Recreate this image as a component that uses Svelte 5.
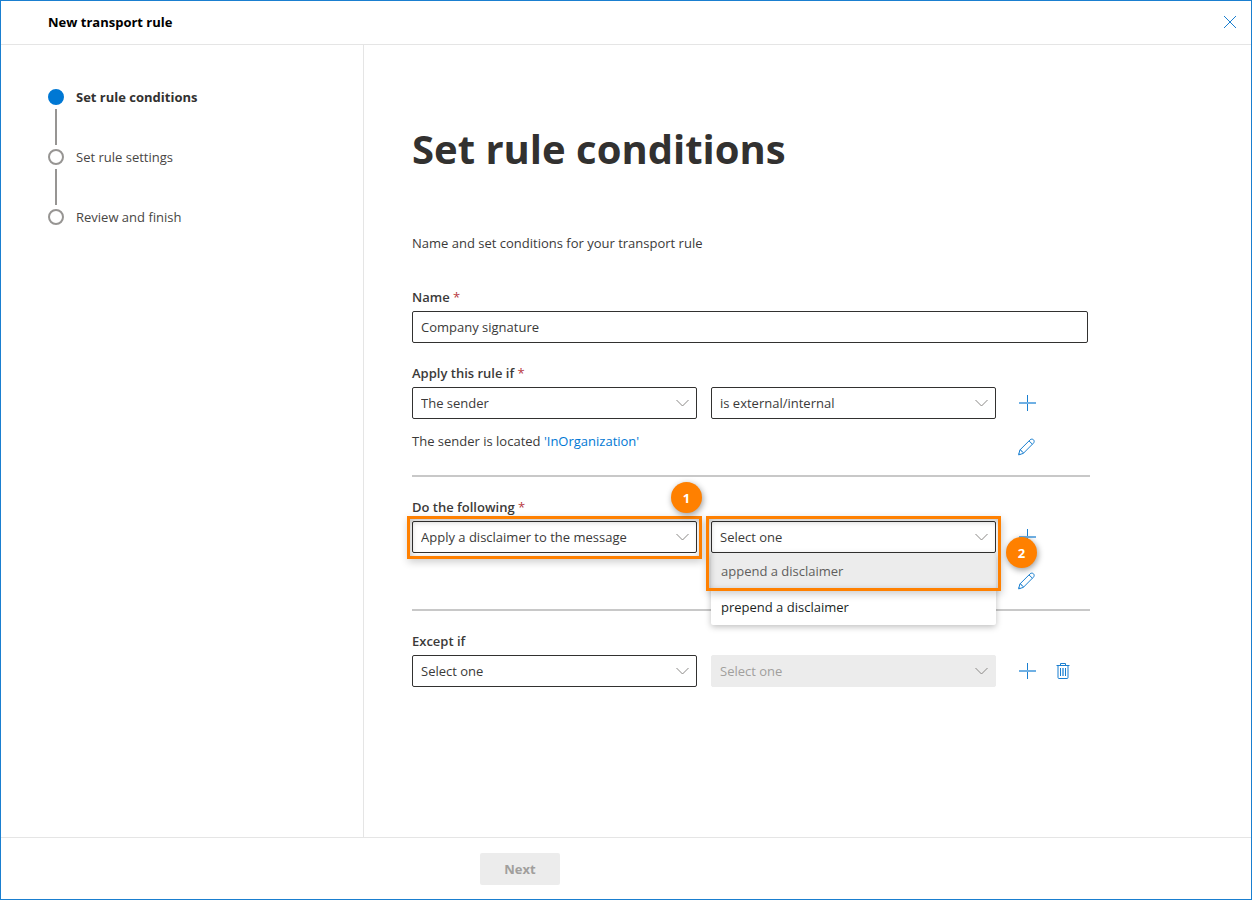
<script>
  const steps = ['Set rule conditions', 'Set rule settings', 'Review and finish']
  const senderOptions = ['The sender', 'The recipient', 'Apply to all messages']
  const scopeOptions = ['is external/internal', 'is this person', 'is a member of this group']
  const disclaimerOptions = ['append a disclaimer', 'prepend a disclaimer']

  let currentStep = $state(0)
  let name = $state('Company signature')
  let condition = $state('The sender')
  let scope = $state('is external/internal')
  let action = $state('Apply a disclaimer to the message')
  let placement = $state('')
  let exception = $state('')
  let menuOpen = $state(true)

  function pick(option) {
    placement = option
    menuOpen = false
  }
</script>

{#snippet chevron()}
  <svg class="chevron" viewBox="0 0 13 8" aria-hidden="true">
    <path d="M0.5 1 L6.5 7 L12.5 1" />
  </svg>
{/snippet}

{#snippet addButton(label)}
  <button type="button" class="icon-btn" aria-label={label}>
    <svg width="18" height="18" viewBox="0 0 18 18" aria-hidden="true">
      <path d="M9.5 1v16" />
      <path class="soft" d="M1 9h17" />
    </svg>
  </button>
{/snippet}

{#snippet editButton(label)}
  <button type="button" class="icon-btn" aria-label={label}>
    <svg width="18" height="18" viewBox="0 0 18 18" aria-hidden="true">
      <path d="M.6 16.9 L1.9 12 L12 1.9 C13 .9 14.6 .9 15.5 1.8 C16.4 2.7 16.4 4.2 15.4 5.2 L5.3 15.4 Z" />
      <path d="M11 2.9 L14.4 6.2 M1.9 12 C3.3 12 3.8 12.6 3.7 13.6 C4.7 13.5 5.3 14.1 5.3 15.4 M.9 15.4 L2 16.5" />
    </svg>
  </button>
{/snippet}

<div class="window">
  <header>
    <strong>New transport rule</strong>
    <button type="button" class="close" aria-label="Close">
      <svg width="14" height="14" viewBox="0 0 14 14" aria-hidden="true">
        <path d="M1 1 L13 13 M13 1 L1 13" />
      </svg>
    </button>
  </header>

  <div class="content">
    <nav aria-label="Steps">
      <ol>
        {#each steps as step, i (step)}
          <li class:active={i === currentStep}>
            <span class="dot"></span>
            <span>{step}</span>
          </li>
        {/each}
      </ol>
    </nav>

    <main>
      <h1>Set rule conditions</h1>
      <p class="intro">Name and set conditions for your transport rule</p>

      <form id="rule-form" onsubmit={(e) => e.preventDefault()}>
        <div class="name-field">
          <label for="name">Name <span class="required">*</span></label>
          <input id="name" type="text" bind:value={name} />
        </div>

        <section>
          <label for="condition">Apply this rule if <span class="required">*</span></label>
          <div class="row">
            <div class="select">
              <select id="condition" bind:value={condition}>
                {#each senderOptions as option (option)}
                  <option>{option}</option>
                {/each}
              </select>
              {@render chevron()}
            </div>
            <div class="select">
              <select aria-label="Condition type" bind:value={scope}>
                {#each scopeOptions as option (option)}
                  <option>{option}</option>
                {/each}
              </select>
              {@render chevron()}
            </div>
            <div class="actions">{@render addButton('Add condition')}</div>
          </div>
          <div class="row detail">
            <p>The sender is located <a href="#location">'InOrganization'</a></p>
            <div class="actions">{@render editButton('Edit condition')}</div>
          </div>
        </section>

        <section>
          <label for="action">Do the following <span class="required">*</span></label>
          <div class="row">
            <div class="select">
              <select id="action" bind:value={action}>
                <option>Apply a disclaimer to the message</option>
                <option>Block the message</option>
              </select>
              {@render chevron()}
              <span class="frame"></span>
              <span class="badge first">1</span>
            </div>
            <div class="select">
              <button
                type="button"
                class="combo"
                aria-haspopup="listbox"
                aria-expanded={menuOpen}
                aria-label="Disclaimer placement"
                onclick={() => (menuOpen = !menuOpen)}>{placement || 'Select one'}</button
              >
              {@render chevron()}
              {#if menuOpen}
                <div class="menu" role="listbox">
                  {#each disclaimerOptions as option, i (option)}
                    <button
                      type="button"
                      role="option"
                      aria-selected={placement === option}
                      class:hovered={i === 0}
                      onclick={() => pick(option)}>{option}</button
                    >
                  {/each}
                </div>
                <span class="frame tall"></span>
              {/if}
              <span class="badge second">2</span>
            </div>
            <div class="actions">{@render addButton('Add action')}</div>
          </div>
          <div class="row detail">
            <p></p>
            <div class="actions">{@render editButton('Edit action')}</div>
          </div>
        </section>

        <section>
          <label for="exception">Except if</label>
          <div class="row">
            <div class="select">
              <select id="exception" bind:value={exception}>
                <option value="">Select one</option>
                {#each senderOptions as option (option)}
                  <option>{option}</option>
                {/each}
              </select>
              {@render chevron()}
            </div>
            <div class="select">
              <select aria-label="Exception type" disabled>
                <option>Select one</option>
              </select>
              {@render chevron()}
            </div>
            <div class="actions">
              {@render addButton('Add exception')}
              <button type="button" class="icon-btn" aria-label="Delete exception">
                <svg width="14" height="18" viewBox="0 0 14 18" aria-hidden="true">
                  <path d="M.5 3.5h13M4.5 3.5v-2h5v2M2 3.5v12q0 1 1 1h8q1 0 1-1v-12" />
                  <path class="soft" d="M7 6v8" />
                  <path d="M4.5 6v8M9.5 6v8" />
                </svg>
              </button>
            </div>
          </div>
        </section>
      </form>
    </main>
  </div>

  <footer>
    <button type="submit" form="rule-form" class="next" disabled>Next</button>
  </footer>
</div>

<style>
  :global(body) {
    margin: 0;
    background: #fff;
  }
  .window {
    box-sizing: border-box;
    min-height: 100vh;
    display: flex;
    flex-direction: column;
    border: 1px solid #1a7fd0;
    font-family: 'Open Sans', 'Noto Sans', sans-serif;
    font-size: 13px;
    line-height: 20px;
    color: #3b3a39;
  }
  button,
  input,
  select {
    font: inherit;
    color: inherit;
  }
  button {
    cursor: pointer;
  }

  header {
    box-sizing: border-box;
    display: flex;
    align-items: center;
    justify-content: space-between;
    height: 44px;
    padding: 0 5px 1px 47px;
    border-bottom: 1px solid #e5e5e5;
    color: #000;
  }
  svg {
    display: block;
    fill: none;
    stroke: #1a7fd0;
    stroke-width: 1;
  }
  .soft {
    stroke: #6fb0e4;
    stroke-width: 2;
  }
  .close,
  .icon-btn {
    display: flex;
    align-items: center;
    justify-content: center;
    width: 32px;
    height: 32px;
    padding: 0;
    border: 0;
    background: none;
  }

  .content {
    flex: 1;
    display: flex;
  }
  nav {
    box-sizing: border-box;
    width: 363px;
    flex-shrink: 0;
    padding: 42px 47px;
    border-right: 1px solid #e5e5e5;
  }
  ol {
    display: grid;
    gap: 40px;
    margin: 0;
    padding: 0;
    list-style: none;
  }
  li {
    position: relative;
    display: flex;
    align-items: center;
    gap: 12px;
    color: #484644;
  }
  li.active {
    font-weight: 700;
    color: #323130;
  }
  .dot {
    box-sizing: border-box;
    width: 16px;
    height: 16px;
    border: 2px solid #979593;
    border-radius: 50%;
  }
  .active .dot {
    border-color: #0078d4;
    background: #0078d4;
  }
  li:not(:last-child)::after {
    content: '';
    position: absolute;
    top: 22px;
    left: 7px;
    width: 2px;
    height: 36px;
    background: #979593;
  }

  main {
    flex: 1;
    min-width: 0;
    padding: 72px 48px 48px;
  }
  h1 {
    margin: 0;
    color: #323130;
    font-size: 40px;
    line-height: 64px;
  }
  .intro {
    margin: 52px 0 34px;
  }
  form {
    max-width: 678px;
  }
  label {
    display: block;
    width: fit-content;
    margin-bottom: 4px;
    font-weight: 600;
  }
  .required {
    color: #b8383e;
    font-weight: 400;
  }
  .name-field {
    margin: 0 2px 20px 0;
  }
  input,
  select,
  .combo {
    display: block;
    box-sizing: border-box;
    width: 100%;
    height: 32px;
    padding: 0 8px;
    border: 1px solid #323130;
    border-radius: 2px;
    background: #fff;
    text-align: left;
  }
  select {
    appearance: none;
  }
  select:disabled {
    border-color: #ececec;
    background: #ececec;
    color: #a19f9d;
    opacity: 1;
  }

  section {
    margin-bottom: 20px;
  }
  section:not(:last-child) {
    border-bottom: 2px solid #c8c8c8;
  }
  .row {
    display: grid;
    grid-template-columns: 285fr 285fr 80px;
    gap: 14px;
  }
  .detail {
    height: 56px;
  }
  .detail p {
    grid-column: span 2;
    margin: 12px 0 0;
  }
  a {
    color: #0078d4;
    text-decoration: none;
  }
  .actions {
    display: flex;
    align-items: center;
    gap: 4px;
    padding-left: 1px;
  }

  .select {
    position: relative;
  }
  .chevron {
    position: absolute;
    top: 12px;
    right: 8px;
    width: 13px;
    height: 8px;
    stroke: #8a8886;
    pointer-events: none;
  }
  .menu {
    position: absolute;
    z-index: 1;
    top: 100%;
    left: 0;
    right: 0;
    background: #fff;
    border-radius: 0 0 2px 2px;
    box-shadow: 0 2px 6px rgba(0, 0, 0, 0.25);
  }
  .menu button {
    display: block;
    width: 100%;
    height: 36px;
    padding: 0 10px;
    border: 0;
    background: none;
    color: #201f1e;
    text-align: left;
  }
  .menu .hovered {
    background: #ececec;
    color: #605e5c;
  }

  /* numbered callouts */
  .frame {
    position: absolute;
    z-index: 2;
    inset: -5px -5px -6px;
    border: 3px solid #ff8000;
    box-shadow:
      1px 3px 8px rgba(0, 0, 0, 0.2),
      inset 1px 2px 6px rgba(0, 0, 0, 0.25);
    pointer-events: none;
  }
  .frame.tall {
    bottom: -38px;
  }
  .badge {
    position: absolute;
    z-index: 3;
    display: flex;
    align-items: center;
    justify-content: center;
    width: 31px;
    height: 31px;
    border-radius: 50%;
    background: #ff8000;
    box-shadow: 1px 2px 6px rgba(0, 0, 0, 0.4);
    color: #fff;
    font-weight: 700;
  }
  .first {
    top: -39px;
    right: -5px;
  }
  .second {
    top: 16px;
    right: -41px;
  }

  footer {
    display: flex;
    padding: 15px 479px 14px;
    border-top: 1px solid #e5e5e5;
  }
  .next {
    width: 80px;
    height: 32px;
    border: 0;
    border-radius: 2px;
    background: #ececec;
    color: #a19f9d;
    font-weight: 700;
    cursor: default;
  }
</style>
